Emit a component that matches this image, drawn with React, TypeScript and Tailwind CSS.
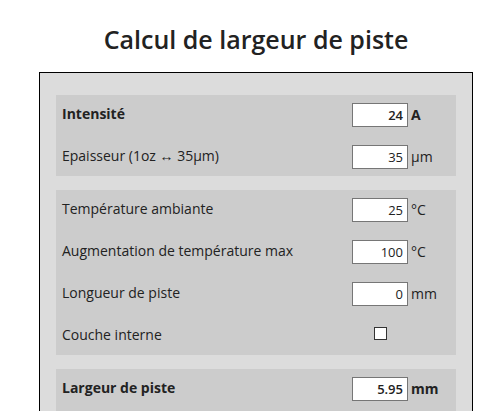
import React from "react";

type RowProps = {
  label: string;
  value?: string;
  unit?: string;
  bold?: boolean;
  checkbox?: boolean;
};

function Row({ label, value, unit, bold, checkbox }: RowProps) {
  return (
    <div className="flex items-center h-[24px]">
      <div
        className={`w-[296px] pl-[6px] text-[14px] leading-none -mt-[3px] ${
          bold ? "font-bold" : ""
        }`}
      >
        {label}
      </div>
      <div className="w-[56px] h-[24px] flex items-center justify-center">
        {checkbox ? (
          <span className="block w-[13px] h-[13px] border border-[#333333] bg-white -mt-[5px] ml-[1px]" />
        ) : (
          <div
            className={`w-[56px] h-[24px] border border-[#767676] bg-white text-right pr-[4px] text-[13px] leading-[22px] ${
              bold ? "font-semibold" : ""
            }`}
          >
            {value}
          </div>
        )}
      </div>
      <div
        className={`w-[48px] pl-[3px] text-[14px] leading-none ${
          bold ? "font-bold" : ""
        }`}
      >
        {unit}
      </div>
    </div>
  );
}

export default function App() {
  return (
    <div
      className="w-[496px] h-[411px] overflow-hidden bg-white text-[#222222]"
      style={{ fontFamily: "'Open Sans', 'Noto Sans', sans-serif" }}
    >
      <div className="w-[434px] ml-[39px]">
        <h1 className="h-[72px] pt-[21px] text-center text-[25px] font-semibold leading-[36px] text-[#222222]">
          Calcul de largeur de piste
        </h1>
        <div className="border border-black bg-[#dcdcdc] px-4 pt-[22px] pb-4 flex flex-col gap-[14px]">
          <div className="bg-[#cccccc] pt-2 pb-[7px] flex flex-col gap-[18px]">
            <Row label="Intensité" value="24" unit="A" bold />
            <Row label="Epaisseur (1oz ↔ 35µm)" value="35" unit="µm" />
          </div>
          <div className="bg-[#cccccc] pt-2 pb-[7px] flex flex-col gap-[18px]">
            <Row label="Température ambiante" value="25" unit="°C" />
            <Row label="Augmentation de température max" value="100" unit="°C" />
            <Row label="Longueur de piste" value="0" unit="mm" />
            <Row label="Couche interne" checkbox />
          </div>
          <div className="bg-[#cccccc] pt-2 pb-[16px] flex flex-col gap-[18px]">
            <Row label="Largeur de piste" value="5.95" unit="mm" bold />
          </div>
        </div>
      </div>
    </div>
  );
}
